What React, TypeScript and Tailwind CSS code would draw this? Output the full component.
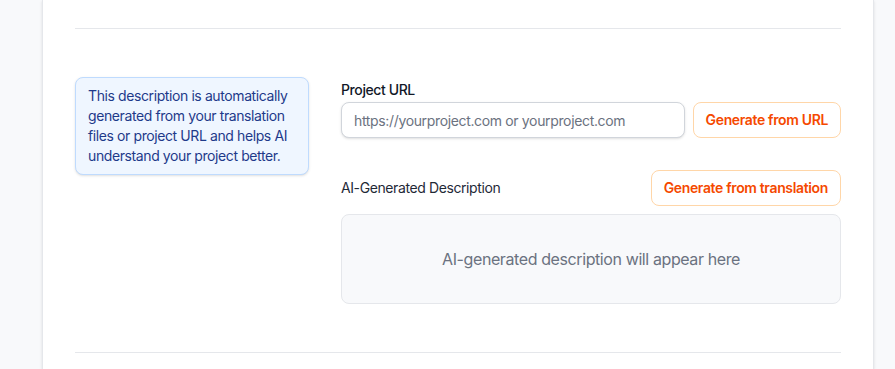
export default function App() {
  return (
    <div
      className="min-h-screen bg-[#f8f9fb] text-[#111827] tracking-tight"
      style={{ fontFamily: "Inter, 'Liberation Sans', sans-serif" }}
    >
      <div className="ml-[42px] w-[832px] bg-white border-x border-[#e5e7eb] shadow-sm px-8">
        <div className="h-[28px]" />
        <div className="border-t border-[#e5e7eb]" />

        <div className="grid grid-cols-3 gap-8 py-12">
          {/* Info box */}
          <div className="self-start rounded-lg border border-[#bfdbfe] bg-[#eff6ff] px-3 py-2 shadow-sm">
            <p className="text-sm leading-5 text-[#1e3a8a]">
              This description is automatically generated from your translation
              files or project URL and helps AI understand your project better.
            </p>
          </div>

          {/* Right column */}
          <div className="col-span-2 flex flex-col">
            <label className="block pt-[3px] pb-[2px] text-sm font-medium leading-5 text-[#111827]">
              Project URL
            </label>
            <div className="flex gap-2">
              <input
                type="text"
                placeholder="https://yourproject.com or yourproject.com"
                className="h-9 flex-1 rounded-lg border border-[#d1d5db] bg-white px-3 text-sm tracking-tight text-[#111827] placeholder:text-[#6b7280] shadow-sm outline-none"
              />
              <button className="h-9 rounded-lg border border-[#ffd6a8] bg-white px-3 text-sm font-semibold tracking-tight text-[#f54900]">
                Generate from URL
              </button>
            </div>

            <div className="mt-8 flex items-center justify-between">
              <span className="text-sm text-[#1f2937]">AI-Generated Description</span>
              <button className="h-9 rounded-lg border border-[#ffd6a8] bg-white px-3 text-sm font-semibold tracking-tight text-[#f54900]">
                Generate from translation
              </button>
            </div>

            <div className="mt-2 flex h-[90px] items-center justify-center rounded-lg border border-[#e5e7eb] bg-[#f8f9fb]">
              <span className="text-base text-[#6b7280]">
                AI-generated description will appear here
              </span>
            </div>
          </div>
        </div>

        <div className="border-t border-[#e5e7eb]" />
        <div className="h-[16px]" />
      </div>
    </div>
  );
}
